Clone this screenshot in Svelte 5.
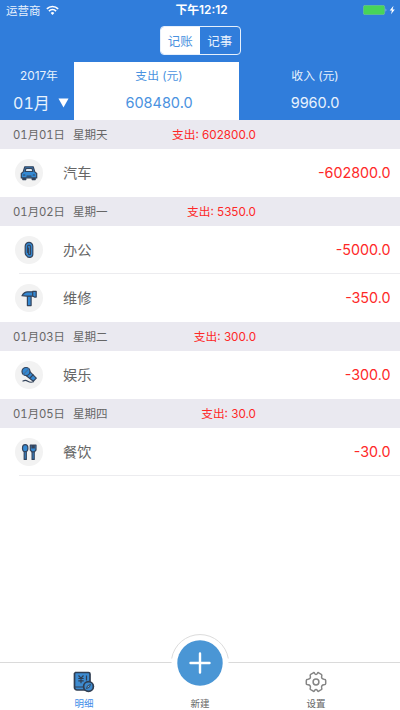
<script>
  let activeTab = $state('detail');
  let mode = $state('账');

  const days = [
    { date: '01月01日', week: '星期天', total: '602800.0', items: [{ icon: 'car', name: '汽车', amount: '-602800.0' }] },
    {
      date: '01月02日',
      week: '星期一',
      total: '5350.0',
      items: [
        { icon: 'clip', name: '办公', amount: '-5000.0' },
        { icon: 'hammer', name: '维修', amount: '-350.0' }
      ]
    },
    { date: '01月03日', week: '星期二', total: '300.0', items: [{ icon: 'mic', name: '娱乐', amount: '-300.0' }] },
    { date: '01月05日', week: '星期四', total: '30.0', items: [{ icon: 'food', name: '餐饮', amount: '-30.0' }] }
  ];
</script>

{#snippet categoryIcon(name)}
  <svg class="glyph" viewBox="0 0 18 18">
    {#if name === 'car'}
      <path d="M2.8 13h3v2.6h-3zM12.2 13h3v2.6h-3z" fill="#34445c" />
      <path d="M4.8 2.8h8.4l1.6 5.1 1.9 1.6v4.4H1.3V9.5l1.9-1.6z" />
      <path d="M5.9 4.5h6.2l.8 3H5.100z" fill="#dfe8f0" />
      <path d="M3.5 11h1.3M13.2 11h1.3M7 12.2h4" />
    {:else if name === 'clip'}
      <path d="M5.2 5.2a3.8 3.8 0 0 1 7.6 0v8a3.3 3.3 0 0 1-6.3 1.3c-.9-.5-1.3-1.3-1.3-2.5z" />
      <path d="M7.5 11.5V5.7a1.5 1.5 0 0 1 3 0v7a1 1 0 0 1-2 0V7" fill="none" />
    {:else if name === 'hammer'}
      <path d="M7.4 7h3.7v9.6H7.4z" />
      <path d="M2 6.7C3.5 4 5 2.8 7.5 2.8h5.2v4.3H6.5z" />
      <path d="M12.7 2.3h3.5v5.8h-1.8l-1.7-1.2z" />
    {:else if name === 'mic'}
      <path d="M3 15c2-1 3.3-.8 4.8.2s3.7 1.3 5.7.6" fill="none" />
      <path d="M6 9.5 9.8 5.7l6.5 6.5-2.9 3z" />
      <path d="m10.5 11.5 2.5-2.7" />
      <circle cx="6" cy="5.5" r="4" />
      <path d="m3.3 8.3 5.5-5.5" stroke="#46729f" />
    {:else}
      <path d="M4.2 8h2.1v8.4H4.2zM12.1 8h2.1v8.4h-2.1z" />
      <ellipse cx="5.2" cy="5.2" rx="2.7" ry="3.5" />
      <path d="M10.3 2v5l1.6 1.8h2.5L16 7V2h-1.7v3h-.6V2h-1.2v3h-.6V2z" />
    {/if}
  </svg>
{/snippet}

<div class="app">
  <header>
    <div class="status">
      <div class="carrier">
        <span>运营商</span>
        <svg class="wifi" viewBox="0 0 12 10">
          <path d="M.8 3.5a7.4 7.4 0 0 1 10.4 0M2.7 5.6a4.7 4.7 0 0 1 6.6 0" />
          <path d="M4.3 7.3a2.4 2.4 0 0 1 3.4 0L6 9.1z" class="dot" />
        </svg>
      </div>
      <span class="time">下午12:12</span>
      <svg class="battery" viewBox="0 0 34 10">
        <rect x=".3" y=".3" width="21.4" height="9.4" rx="1.8" fill="#47d459" stroke="#79bda5" stroke-width=".6" />
        <path d="M22.7 3.3q1.3 1.700 0 3.4z" fill="#b9d8f5" />
        <path d="m30.5.8-3.8 4.7h2.2l-.9 3.8 3.8-4.9h-2.2z" fill="#fff" />
      </svg>
    </div>

    <div class="segment">
      <button class:on={mode === '账'} onclick={() => (mode = '账')}>记账</button>
      <button class:on={mode === '事'} onclick={() => (mode = '事')}>记事</button>
    </div>

    <div class="summary">
      <div class="month">
        <span class="label">2017年</span>
        <span class="pick">01月
          <svg viewBox="0 0 10 10"><path d="M0 .5h10L5 9.5z" fill="#fff" /></svg>
        </span>
      </div>
      <div class="sum active">
        <span class="label">支出 (元)</span>
        <span class="value">608480.0</span>
      </div>
      <div class="sum">
        <span class="label">收入 (元)</span>
        <span class="value">9960.0</span>
      </div>
    </div>
  </header>

  <main>
    {#each days as day}
      <section>
        <h2>
          <span class="date">{day.date}</span>
          <span class="week">{day.week}</span>
          <span class="total">支出: {day.total}</span>
        </h2>
        <ul>
          {#each day.items as item}
            <li>
              <span class="badge">{@render categoryIcon(item.icon)}</span>
              <span class="name">{item.name}</span>
              <span class="amount">{item.amount}</span>
            </li>
          {/each}
        </ul>
      </section>
    {/each}
  </main>

  <nav>
    <button class="tab" class:current={activeTab === 'detail'} onclick={() => (activeTab = 'detail')}>
      <svg class="tab-icon" viewBox="0 0 22 22">
        <path d="M2.5 1.5h13a1.5 1.5 0 0 1 1.5 1.5v16H4a2.5 2.5 0 0 1-2.5-2.5v-14z" fill="#3d8bd0" stroke="#303e52" stroke-width="1.7" />
        <path d="M2 16h9M5.5 4.5 8 7.2l2.5-2.7M8 7.2v5M5.3 7.5h5.4M5.3 9.8h5.4M13.5 4.5v5" fill="none" stroke="#303e52" stroke-width="1.2" />
        <circle cx="15.5" cy="15.5" r="4.9" fill="#3d8bd0" stroke="#303e52" stroke-width="1.7" />
        <path d="m13.5 17.5 1-2.7 3-1.4-1.2 2.9z" fill="#6fa9dc" stroke="#303e52" stroke-width=".9" />
      </svg>
      <span>明细</span>
    </button>
    <button class="tab create">
      <svg class="plus" viewBox="0 0 60 60">
        <path d="M1.5 30a28.5 28.5 0 0 1 57 0z" fill="#fff" />
        <path d="M1.7 25.5a28.7 28.7 0 0 1 56.6 0" fill="none" stroke="#dcdcdc" />
        <circle cx="30" cy="30" r="22.7" fill="#4a96d5" />
        <path d="M30 20.5v19M20.5 30h19" stroke="#fff" stroke-width="2.4" stroke-linecap="round" />
      </svg>
      <span>新建</span>
    </button>
    <button class="tab" class:current={activeTab === 'setting'} onclick={() => (activeTab = 'setting')}>
      <svg class="tab-icon" viewBox="0 0 22 22">
        <path
          d="M7.9 2.1Q9 1 9.5 2.3Q11 4.6 12.5 2.3Q13 1 14.1 2.1L16.3 3.3Q17.3 3.9 16.7 5Q16 8 19 8.2Q20.7 8.2 20.7 9.5V12.5Q20.7 13.8 19 13.8Q16 14 16.7 17Q17.3 18.1 16.3 18.7L14.1 19.9Q13 21 12.5 19.7Q11 17.4 9.5 19.7Q9 21 7.9 19.9L5.7 18.7Q4.7 18.1 5.3 17Q6 14 3 13.8Q1.3 13.8 1.3 12.5V9.5Q1.3 8.2 3 8.2Q6 8 5.3 5Q4.7 3.9 5.7 3.3Z"
          fill="none" stroke="#858585" stroke-width="1.5" stroke-linejoin="round" />
        <circle cx="11" cy="11" r="2.9" fill="none" stroke="#858585" stroke-width="1.5" />
      </svg>
      <span>设置</span>
    </button>
  </nav>
</div>

<style>
  :global(body) {
    background: #fff;
  }

  .app {
    display: flex;
    flex-direction: column;
    width: 400px;
    height: 710px;
    overflow: hidden;
    font-family: Inter, 'Noto Sans CJK SC', sans-serif;
    color: #666;
  }

  button {
    padding: 0;
    border: 0;
    background: none;
    font: inherit;
    color: inherit;
  }

  header {
    display: flex;
    flex-direction: column;
    height: 120px;
    flex: none;
    background: #307ddb;
    color: #e8f2fd;
  }

  .status {
    display: grid;
    grid-template-columns: 1fr auto 1fr;
    align-items: center;
    height: 20px;
    padding: 0 3px 0 6px;
    font-size: 11.5px;
  }

  .carrier {
    display: flex;
    align-items: center;
    gap: 5px;
  }

  .wifi {
    width: 13px;
    height: 11px;
    fill: none;
    stroke: #fff;
    stroke-width: 1.5;
  }

  .wifi .dot {
    fill: #fff;
    stroke: none;
  }

  .time {
    font-size: 11.8px;
    font-weight: 600;
    line-height: 16px;
    padding-bottom: 1px;
    color: #fff;
  }

  .battery {
    width: 34px;
    height: 10px;
    justify-self: end;
  }

  .segment {
    display: flex;
    align-self: center;
    box-sizing: border-box;
    width: 81px;
    height: 29px;
    margin-top: 6px;
    border: 1px solid #e6f0fc;
    border-radius: 4px;
    overflow: hidden;
    font-size: 12.5px;
  }

  .segment button {
    flex: 1;
  }

  .segment .on {
    background: #fff;
    color: #4a92e0;
  }

  .summary {
    display: grid;
    grid-template-columns: 74px 165px 1fr;
    flex: 1;
    margin-top: 6.5px;
  }

  .month,
  .sum {
    display: flex;
    flex-direction: column;
    line-height: 18px;
    padding-top: 5px;
    gap: 9px;
    box-sizing: border-box;
  }

  .sum {
    align-items: center;
    padding-left: 5px;
  }

  .sum:last-child {
    padding-left: 0;
    padding-right: 9px;
  }

  .month .label {
    padding-left: 20px;
  }

  .label {
    font-size: 11.8px;
  }

  .value {
    font-size: 14.5px;
  }

  .pick {
    display: flex;
    align-items: center;
    justify-content: space-between;
    padding: 0 5px 0 13px;
    font-size: 16px;
    font-variant-numeric: tabular-nums;
  }

  .pick svg {
    width: 11px;
    height: 10px;
  }

  .active {
    background: #fff;
    color: #4a92e0;
  }

  h2 {
    display: flex;
    align-items: center;
    box-sizing: border-box;
    height: 29px;
    margin: 0;
    padding: 0 144px 2px 13px;
    background: #eae9f0;
    font-size: 11.5px;
    font-weight: 400;
  }

  .date {
    width: 60px;
    white-space: nowrap;
    font-size: 11.3px;
    font-variant-numeric: tabular-nums;
  }

  .total {
    margin-left: auto;
    font-size: 11.7px;
    color: #fe2828;
  }

  ul {
    margin: 0;
    padding: 0 0 0 19px;
    list-style: none;
  }

  li {
    display: flex;
    align-items: center;
    box-sizing: border-box;
    height: 48px;
    padding: 0 9.5px 0 0;
  }

  li:not(:last-child),
  section:last-child li {
    border-bottom: 1px solid #ececef;
  }

  .badge {
    display: flex;
    align-items: center;
    justify-content: center;
    width: 28px;
    height: 28px;
    margin-left: -4px;
    border-radius: 50%;
    background: #f2f2f2;
  }

  .glyph {
    width: 18px;
    height: 18px;
    fill: #3489d3;
    stroke: #34445c;
    stroke-width: 1.2;
    stroke-linejoin: round;
    stroke-linecap: round;
  }

  .name {
    margin-left: 20px;
    padding-bottom: 2px;
    font-size: 14.2px;
  }

  .amount {
    margin-left: auto;
    padding-bottom: 1px;
    font-size: 14.3px;
    color: #fe2828;
  }

  nav {
    display: grid;
    grid-template-columns: 116px 116px 116px;
    justify-content: center;
    box-sizing: border-box;
    height: 48px;
    margin-top: auto;
    border-top: 1px solid #dadada;
    font-size: 9.5px;
  }

  .tab {
    display: flex;
    flex-direction: column;
    align-items: center;
    justify-content: flex-end;
    line-height: 12px;
    gap: 5px;
  }

  .tab-icon {
    width: 22px;
    height: 22px;
  }

  .current {
    color: #3f8ee8;
  }

  .create {
    min-height: 0;
    gap: 5px;
  }

  .plus {
    width: 60px;
    height: 60px;
    flex: none;
  }
</style>
